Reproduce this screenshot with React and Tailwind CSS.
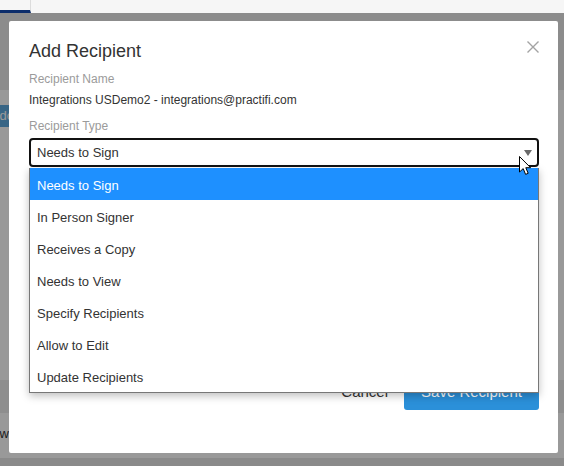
import React from 'react'

const options = [
  'Needs to Sign',
  'In Person Signer',
  'Receives a Copy',
  'Needs to View',
  'Specify Recipients',
  'Allow to Edit',
  'Update Recipients'
]

const CloseIcon = () => (
  <svg width="12" height="12" viewBox="0 0 12 12">
    <path d="M0.5 0.5 L11.5 11.5 M11.5 0.5 L0.5 11.5" stroke="#a3a3a3" strokeWidth="1.4" fill="none" />
  </svg>
)

const Caret = () => (
  <svg width="8" height="6" viewBox="0 0 8 6">
    <polygon points="0,0 8,0 4,6" fill="#6b6b6b" />
  </svg>
)

const Pointer = () => (
  <svg width="13" height="20" viewBox="0 0 13 20">
    <path
      d="M0.5 0.5 L0.5 16 L4.2 12.6 L6.6 18.4 L9.2 17.3 L6.8 11.7 L11.6 11.7 Z"
      fill="#fff"
      stroke="#000"
      strokeWidth="1"
      strokeLinejoin="round"
    />
  </svg>
)

// page that sits behind the backdrop
const Page = () => (
  <div className="flex h-full flex-col">
    <div className="flex h-[13px] bg-[#f6f6f6]">
      <div className="w-[31px] border-r border-b-[3px] border-r-[#dcdcdc] border-b-[#0c2d6b]" />
    </div>
    <div className="h-[77px] bg-[#e9e9e9]" />
    <div className="mt-[15px] flex">
      <div className="ml-[-25px] flex h-[22px] w-[80px] items-center bg-[#5ea9de] pl-[8px] text-[13px] text-white">
        Undo
      </div>
    </div>
    <div className="h-[253px]" />
    <div className="h-[33px] bg-[#ededed]" />
    <div className="flex h-[45px] items-end">
      <div className="ml-[-60px] w-[69px] pb-[16px] text-right text-[13px] leading-4 text-[#333]">Overview</div>
    </div>
    <div className="flex-1 bg-[#e6e6e6]" />
  </div>
)

export default function App() {
  return (
    <div className="relative h-[466px] w-[564px] overflow-hidden bg-white font-['Liberation_Sans',Arial,sans-serif]">
      <Page />

      {/* backdrop */}
      <div className="absolute inset-x-0 top-[13px] bottom-0 bg-black/40" />

      {/* modal */}
      <div className="absolute left-[9px] top-[21px] flex h-[432px] w-[549px] flex-col rounded-[2px] bg-white pt-[18px] pr-[19px] pb-[43px] pl-[20px]">
        <button className="absolute right-[19px] top-[20px]">
          <CloseIcon />
        </button>

        <h2 className="text-[18px] leading-6 text-[#333]">Add Recipient</h2>

        <div className="mt-2 text-[12px] leading-4 text-[#9b9b9b]">Recipient Name</div>
        <div className="mt-[5px] text-[12px] leading-4 text-[#333]">
          Integrations USDemo2 - integrations@practifi.com
        </div>

        <div className="mt-[10px] text-[12px] leading-4 text-[#9b9b9b]">Recipient Type</div>
        <div className="relative z-10 mt-1">
          <div className="flex h-[29px] items-center justify-between rounded-[4px] border-2 border-[#111] pl-[6px] pr-[5px] text-[13px] text-[#333]">
            <span>Needs to Sign</span>
            <Caret />
          </div>
          <ul className="absolute left-0 right-0 top-full mt-px border-x border-b border-[#777] bg-white shadow-[0_3px_8px_rgba(0,0,0,0.25)]">
            {options.map((o, i) => (
              <li
                key={o}
                className={`h-8 pl-[7px] pt-[10px] text-[13px] leading-4 ${
                  i === 0 ? 'bg-[#1e90ff] text-white' : 'text-[#333]'
                }`}
              >
                {o}
              </li>
            ))}
          </ul>
        </div>

        <div className="mt-auto flex items-center justify-end gap-4">
          <button className="text-[15px] text-[#333]">Cancel</button>
          <button className="h-[35px] w-[135px] rounded-[3px] bg-[#2b90d9] text-[15px] text-white">
            Save Recipient
          </button>
        </div>
      </div>

      {/* mouse pointer */}
      <div className="pointer-events-none absolute left-[519px] top-[156px] z-20">
        <Pointer />
      </div>
    </div>
  )
}
